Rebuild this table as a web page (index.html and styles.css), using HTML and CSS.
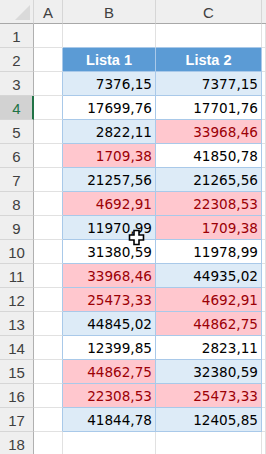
FILE: index.html
```html
<!DOCTYPE html>
<html>
<head>
<meta charset="utf-8">
<link rel="stylesheet" href="styles.css">
</head>
<body>
<div class="sheet">
  <div class="corner"><span class="tri"></span></div><div class="ch">A</div><div class="ch">B</div><div class="ch">C</div><div class="ch last"></div>

  <div class="rh">1</div><div class="c"></div><div class="c top"></div><div class="c top"></div><div class="c"></div>
  <div class="rh">2</div><div class="c edge"></div><div class="c th">Lista 1</div><div class="c th">Lista 2</div><div class="c"></div>
  <div class="rh">3</div><div class="c edge"></div><div class="c n band">7376,15</div><div class="c n band">7377,15</div><div class="c"></div>
  <div class="rh sel">4</div><div class="c edge"></div><div class="c n">17699,76</div><div class="c n">17701,76</div><div class="c"></div>
  <div class="rh">5</div><div class="c edge"></div><div class="c n band">2822,11</div><div class="c n bad">33968,46</div><div class="c"></div>
  <div class="rh">6</div><div class="c edge"></div><div class="c n bad">1709,38</div><div class="c n">41850,78</div><div class="c"></div>
  <div class="rh">7</div><div class="c edge"></div><div class="c n band">21257,56</div><div class="c n band">21265,56</div><div class="c"></div>
  <div class="rh">8</div><div class="c edge"></div><div class="c n bad">4692,91</div><div class="c n bad">22308,53</div><div class="c"></div>
  <div class="rh">9</div><div class="c edge"></div><div class="c n band">11970,99</div><div class="c n bad">1709,38</div><div class="c"></div>
  <div class="rh">10</div><div class="c edge"></div><div class="c n">31380,59</div><div class="c n">11978,99</div><div class="c"></div>
  <div class="rh">11</div><div class="c edge"></div><div class="c n bad">33968,46</div><div class="c n band">44935,02</div><div class="c"></div>
  <div class="rh">12</div><div class="c edge"></div><div class="c n bad">25473,33</div><div class="c n bad">4692,91</div><div class="c"></div>
  <div class="rh">13</div><div class="c edge"></div><div class="c n band">44845,02</div><div class="c n bad">44862,75</div><div class="c"></div>
  <div class="rh">14</div><div class="c edge"></div><div class="c n">12399,85</div><div class="c n">2823,11</div><div class="c"></div>
  <div class="rh">15</div><div class="c edge"></div><div class="c n bad">44862,75</div><div class="c n band">32380,59</div><div class="c"></div>
  <div class="rh">16</div><div class="c edge"></div><div class="c n bad">22308,53</div><div class="c n bad">25473,33</div><div class="c"></div>
  <div class="rh">17</div><div class="c edge"></div><div class="c n band">41844,78</div><div class="c n band">12405,85</div><div class="c"></div>
  <div class="rh">18</div><div class="c"></div><div class="c"></div><div class="c"></div><div class="c"></div>

  <svg class="cursor" width="17" height="17" viewBox="0 0 17 17">
    <path d="M6 1.5h5v4.5h4.5v5h-4.5v4.5h-5v-4.5h-4.5v-5h4.5z" fill="#fff" stroke="#000" stroke-width="1.6" stroke-linejoin="miter"/>
  </svg>
</div>
</body>
</html>
```

FILE: styles.css
```css
html, body {
  margin: 0;
  padding: 0;
  background: #fff;
  overflow: hidden;
}

.sheet {
  position: relative;
  display: grid;
  grid-template-columns: 34px 29px 93px 106px 1fr;
  grid-auto-rows: 24px;
  width: 266px;
  font-family: "DejaVu Sans", sans-serif;
}

.sheet > div {
  box-sizing: border-box;
  border-right: 1px solid #e1e1e1;
  border-bottom: 1px solid #e1e1e1;
  display: flex;
  align-items: center;
  overflow: hidden;
  white-space: nowrap;
}

.sheet > .corner {
  position: relative;
  background: #efefef;
  border-right: 1px solid #d6d6d6;
  border-bottom: 1px solid #a8a8a8;
}

.tri {
  position: absolute;
  right: 3px;
  bottom: 3px;
  width: 0;
  height: 0;
  border-left: 15px solid transparent;
  border-bottom: 15px solid #dadada;
}

.sheet > .ch {
  background: #efefef;
  border-right: 1px solid #d6d6d6;
  border-bottom: 1px solid #a8a8a8;
  justify-content: center;
  font-family: "Liberation Sans", sans-serif;
  font-size: 15px;
  color: #404040;
  padding-top: 1px;
}

.sheet > .ch.last {
  border-right: none;
}

.sheet > .rh {
  background: #efefef;
  border-right: 1px solid #b0b0b0;
  border-bottom: 1px solid #d6d6d6;
  justify-content: center;
  font-family: "Liberation Sans", sans-serif;
  font-size: 15px;
  color: #404040;
  padding-top: 1px;
}

.sheet > .rh.sel {
  background: #d2d2d2;
  color: #217346;
  border-right: 2px solid #217346;
  padding-left: 1px;
}

.sheet > .c.top {
  border-bottom-color: #a9c9e9;
}

.sheet > .c.edge {
  border-right-color: #a9c9e9;
}

.sheet > .th {
  background: #5b9bd5;
  color: #fff;
  font-family: "Liberation Sans", sans-serif;
  font-weight: bold;
  font-size: 14.5px;
  justify-content: center;
  border-right-color: #a9c9e9;
  border-bottom-color: #a9c9e9;
  padding-top: 1px;
}

.sheet > .n {
  justify-content: flex-end;
  padding-right: 3px;
  padding-top: 1px;
  font-size: 13.6px;
  color: #000;
  border-right-color: #a9c9e9;
  border-bottom-color: #a9c9e9;
}

.sheet > .band {
  background: #ddebf7;
}

.sheet > .bad {
  background: #ffc7ce;
  color: #9c0006;
}

.cursor {
  position: absolute;
  left: 128px;
  top: 229px;
}
```
